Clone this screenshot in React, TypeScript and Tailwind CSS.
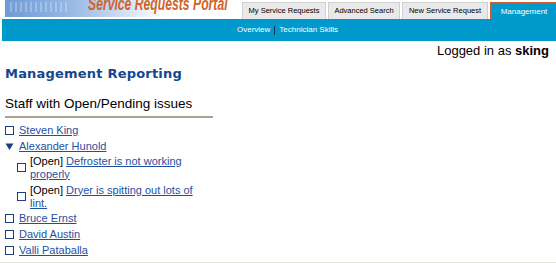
import React from "react";

const sans = { fontFamily: '"Liberation Sans", Arial, sans-serif' };

function Box() {
  return <span className="inline-block w-[9px] h-[9px] border border-[#1d3f7e] bg-white shrink-0" />;
}

function Tri() {
  return (
    <svg width="9" height="9" viewBox="0 0 9 9" className="shrink-0">
      <polygon points="0.5,1.5 8.5,1.5 4.5,8" fill="#1d3f7e" />
    </svg>
  );
}

const link = "text-[#1f4f9f] underline underline-offset-[1px]";

export default function App() {
  return (
    <div className="w-[556px] h-[263px] overflow-hidden bg-white relative text-black" style={sans}>
      {/* header */}
      <div className="flex h-[19px] items-end">
        <div className="relative w-[243px] h-[19px] overflow-hidden">
          <div className="absolute left-[5px] top-0 w-[160px] h-[17px] bg-[linear-gradient(90deg,#6f9bd6_0%,#8fb3e2_35%,#b6cdec_60%,#e4eef9_85%,#ffffff_100%)]" />
          <div className="absolute left-[10px] top-[2px] w-[60px] h-[10px] bg-[repeating-linear-gradient(90deg,rgba(255,255,255,0.25)_0px,rgba(255,255,255,0.25)_2px,transparent_2px,transparent_5px)]" />
          <div className="absolute left-[88px] top-[1px] text-[12.2px] font-bold italic text-[#d2642a] whitespace-nowrap leading-[13px] origin-bottom scale-y-[1.45]">
            Service Requests Portal
          </div>
        </div>
        <div className="flex h-[17px] gap-[2px] items-stretch text-[7.5px] whitespace-nowrap">
          <div className="w-[84px] bg-[#e9e9e9] border border-b-0 border-[#d0d0d0] flex items-center justify-center">My Service Requests</div>
          <div className="w-[72px] bg-[#e9e9e9] border border-b-0 border-[#d0d0d0] flex items-center justify-center">Advanced Search</div>
          <div className="w-[86px] bg-[#e9e9e9] border border-b-0 border-[#d0d0d0] flex items-center justify-center">New Service Request</div>
          <div className="w-[66px] bg-[#0099cc] border-l-2 border-t-2 border-[#cf5a2a] text-white text-[8px] flex items-center justify-center">Management</div>
        </div>
      </div>
      {/* blue bar */}
      <div className="ml-[2px] h-[22px] bg-[#0099cc] flex items-center text-[8px] text-white">
        <div className="ml-[235px] flex items-center">
          <span>Overview</span>
          <span className="mx-[4px] w-px h-[9px] bg-[#0c2e52]" />
          <span>Technician Skills</span>
        </div>
      </div>
      {/* logged in */}
      <div className="flex justify-end pr-[7px] pt-[2px] text-[13px] leading-[16px]">
        <span>Logged in as <b>sking</b></span>
      </div>
      {/* heading */}
      <div className="mt-[7px] ml-[5px] text-[13px] font-bold leading-[16px] text-[#13468f] tracking-[0.2px]" style={{ fontFamily: '"DejaVu Sans", Verdana, sans-serif' }}>
        Management Reporting
      </div>
      <div className="mt-[14px] ml-[5px] text-[13.5px] leading-[16px]">Staff with Open/Pending issues</div>
      <div className="ml-[5px] mt-[4px] w-[208px] h-[1.5px] bg-[#a6a690]" />
      {/* list */}
      <div className="mt-[5px] ml-[5px] flex flex-col text-[11px]">
        <div className="flex items-center gap-[5px] h-[16px]">
          <Box />
          <span className={link}>Steven King</span>
        </div>
        <div className="flex items-center gap-[5px] h-[16px]">
          <Tri />
          <span className={link}>Alexander Hunold</span>
        </div>
        <div className="flex items-center gap-[4px] ml-[12px] w-[190px] leading-[13px]">
          <Box />
          <span>
            [Open] <span className={link}>Defroster is not working properly</span>
          </span>
        </div>
        <div className="flex items-center gap-[4px] ml-[12px] mt-[3px] w-[190px] leading-[13px]">
          <Box />
          <span>
            [Open] <span className={link}>Dryer is spitting out lots of lint.</span>
          </span>
        </div>
        <div className="flex items-center gap-[5px] h-[16px] mt-[1px]">
          <Box />
          <span className={link}>Bruce Ernst</span>
        </div>
        <div className="flex items-center gap-[5px] h-[16px]">
          <Box />
          <span className={link}>David Austin</span>
        </div>
        <div className="flex items-center gap-[5px] h-[16px]">
          <Box />
          <span className={link}>Valli Pataballa</span>
        </div>
      </div>
      <div className="absolute left-0 right-0 bottom-0 h-px bg-[#e4e4dc]" />
    </div>
  );
}
